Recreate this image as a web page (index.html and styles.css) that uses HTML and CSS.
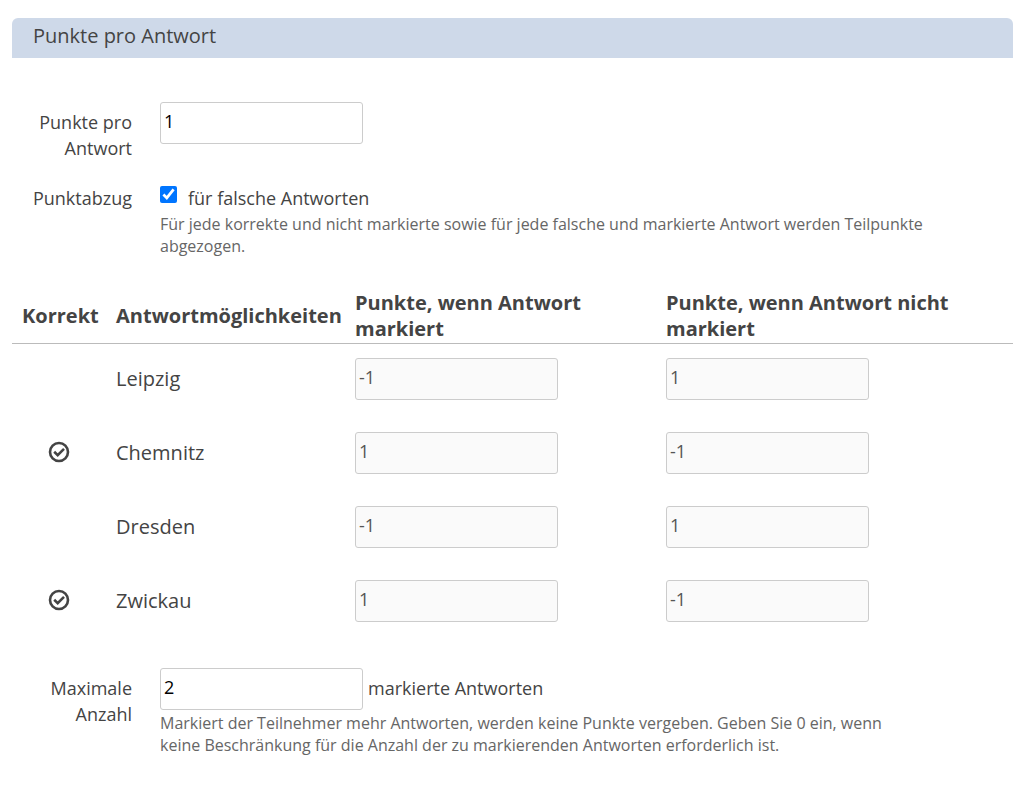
FILE: index.html
```html
<!DOCTYPE html>
<html lang="de">
<head>
<meta charset="utf-8">
<meta name="viewport" content="width=device-width, initial-scale=1">
<title>Punkte pro Antwort</title>
<link rel="stylesheet" href="styles.css">
</head>
<body>
<main class="panel">
  <h1 class="panel-title">Punkte pro Antwort</h1>
  <form class="form">
    <div class="field">
      <label class="field-label" for="points">Punkte pro Antwort</label>
      <div class="field-body"><input class="text-input" id="points" type="text" value="1"></div>
    </div>
    <div class="field field-check">
      <span class="field-label">Punktabzug</span>
      <div class="field-body">
        <div class="check-row">
          <input class="checkbox" id="deduct" type="checkbox" checked>
          <label for="deduct">für falsche Antworten</label>
        </div>
        <p class="hint">Für jede korrekte und nicht markierte sowie für jede falsche und markierte Antwort werden Teilpunkte abgezogen.</p>
      </div>
    </div>
    <table class="answers">
      <colgroup><col class="col-correct"><col class="col-answer"><col class="col-marked"><col></colgroup>
      <thead>
        <tr>
          <th scope="col">Korrekt</th>
          <th scope="col">Antwortmöglichkeiten</th>
          <th scope="col">Punkte, wenn Antwort markiert</th>
          <th scope="col">Punkte, wenn Antwort nicht markiert</th>
        </tr>
      </thead>
      <tbody>
        <tr>
          <td class="correct"></td>
          <td>Leipzig</td>
          <td><input class="text-input" type="text" value="-1" aria-label="Leipzig markiert" disabled></td>
          <td><input class="text-input" type="text" value="1" aria-label="Leipzig nicht markiert" disabled></td>
        </tr>
        <tr>
          <td class="correct"><svg class="check-icon" viewBox="0 0 22 22" role="img" aria-label="Korrekt"><circle cx="11" cy="11" r="9"/><path d="M6.2 10.8 9.7 14.2 16 7.9"/></svg></td>
          <td>Chemnitz</td>
          <td><input class="text-input" type="text" value="1" aria-label="Chemnitz markiert" disabled></td>
          <td><input class="text-input" type="text" value="-1" aria-label="Chemnitz nicht markiert" disabled></td>
        </tr>
        <tr>
          <td class="correct"></td>
          <td>Dresden</td>
          <td><input class="text-input" type="text" value="-1" aria-label="Dresden markiert" disabled></td>
          <td><input class="text-input" type="text" value="1" aria-label="Dresden nicht markiert" disabled></td>
        </tr>
        <tr>
          <td class="correct"><svg class="check-icon" viewBox="0 0 22 22" role="img" aria-label="Korrekt"><circle cx="11" cy="11" r="9"/><path d="M6.2 10.8 9.7 14.2 16 7.9"/></svg></td>
          <td>Zwickau</td>
          <td><input class="text-input" type="text" value="1" aria-label="Zwickau markiert" disabled></td>
          <td><input class="text-input" type="text" value="-1" aria-label="Zwickau nicht markiert" disabled></td>
        </tr>
      </tbody>
    </table>
    <div class="field">
      <label class="field-label" for="maximum">Maximale Anzahl</label>
      <div class="field-body">
        <div class="input-row"><input class="text-input" id="maximum" type="text" value="2"><span>markierte Antworten</span></div>
        <p class="hint hint-narrow">Markiert der Teilnehmer mehr Antworten, werden keine Punkte vergeben. Geben Sie 0 ein, wenn keine Beschränkung für die Anzahl der zu markierenden Antworten erforderlich ist.</p>
      </div>
    </div>
  </form>
</main>
</body>
</html>
```
FILE: styles.css
```css
* { box-sizing: border-box; }

body {
  margin: 0;
  background: #fff;
  color: #444;
  font-family: "Open Sans", "Noto Sans", sans-serif;
  font-size: 18px;
  line-height: 26px;
}

.panel { padding: 18px 11px 32px 12px; }

.panel-title {
  margin: 0 0 44px;
  padding: 4px 21px 8px;
  border-radius: 6px 6px 0 0;
  background: #ced9e9;
  font-size: 20px;
  font-weight: 400;
  line-height: 28px;
}

.field {
  display: grid;
  grid-template-columns: 120px minmax(0, 1fr);
  column-gap: 28px;
}

.field-label { padding-top: 7px; text-align: right; }
.field-check { margin-top: 17px; }

.text-input {
  display: block;
  width: 203px;
  height: 42px;
  padding: 0 4px 4px 3px;
  border: 1px solid #ccc;
  border-radius: 3px;
  background: #fff;
  color: #000;
  font: inherit;
}

.text-input:disabled { background: #fafafa; color: #555; }

.check-row {
  display: flex;
  gap: 11px;
  padding-top: 7px;
}

.checkbox {
  width: 17px;
  height: 17px;
  margin: 1px 0 0;
  accent-color: #0075ff;
}

.input-row {
  display: flex;
  gap: 5px;
  line-height: 40px;
}

.hint {
  max-width: 780px;
  margin: 2px 0 0;
  color: #666;
  font-size: 16px;
  line-height: 22px;
}

.hint-narrow { max-width: 740px; }

.answers {
  width: 100%;
  margin: 27px 0 28px;
  border-collapse: collapse;
  table-layout: fixed;
  font-size: 20px;
}

.col-correct { width: 94px; }
.col-answer { width: 239px; }
.col-marked { width: 311px; }

.answers th {
  padding: 6px 10px 1px;
  border-bottom: 1px solid #bbb;
  text-align: left;
  line-height: 26px;
}

.answers td {
  height: 74px;
  padding: 14px 10px 18px;
  vertical-align: top;
  line-height: 42px;
}

.answers .text-input { font-size: 18px; line-height: 26px; }
.answers .correct { text-align: center; }

.check-icon {
  display: block;
  width: 22px;
  height: 22px;
  margin: 9px auto 0;
  fill: none;
  stroke: #444;
  stroke-width: 2.6;
}
```
